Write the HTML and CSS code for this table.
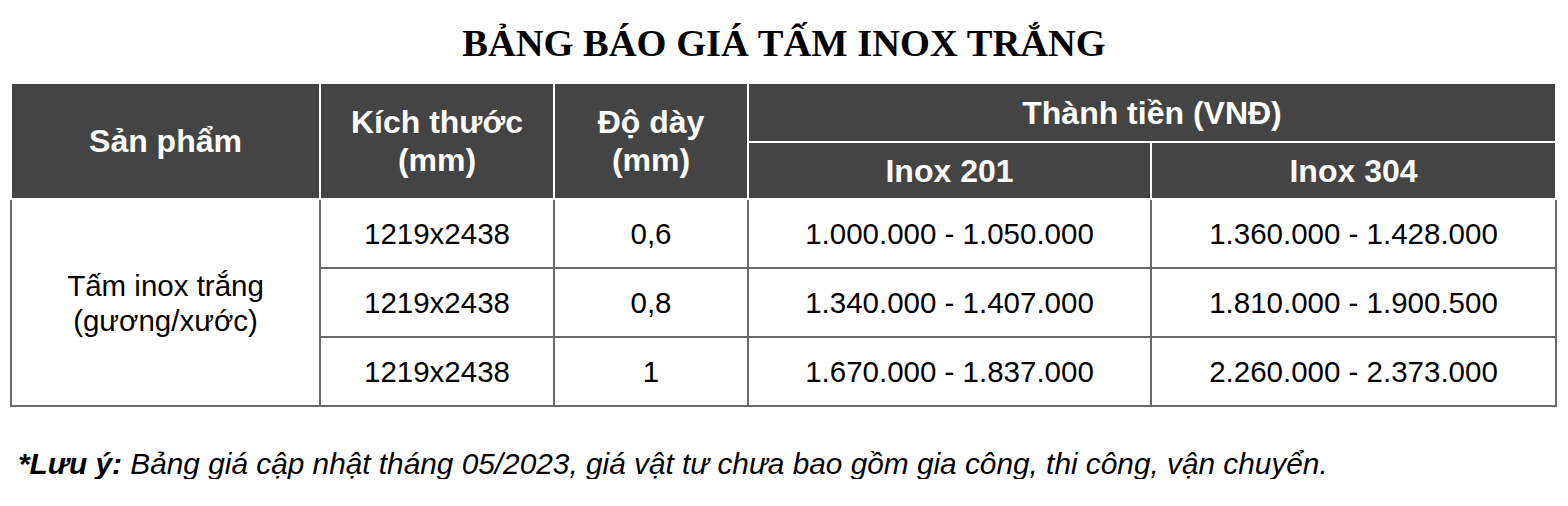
FILE: index.html
```html
<!DOCTYPE html>
<html lang="vi">
<head>
<meta charset="utf-8">
<title>Bảng báo giá tấm inox trắng</title>
<link rel="stylesheet" href="styles.css">
</head>
<body>
<h1 class="title">BẢNG BÁO GIÁ TẤM INOX TRẮNG</h1>
<table class="price">
  <colgroup>
    <col class="c1"><col class="c2"><col class="c3"><col class="c4"><col class="c5">
  </colgroup>
  <thead>
    <tr class="h1">
      <th rowspan="2">Sản phẩm</th>
      <th rowspan="2">Kích thước<br>(mm)</th>
      <th rowspan="2">Độ dày<br>(mm)</th>
      <th colspan="2">Thành tiền (VNĐ)</th>
    </tr>
    <tr class="h2">
      <th>Inox 201</th>
      <th>Inox 304</th>
    </tr>
  </thead>
  <tbody>
    <tr>
      <td rowspan="3" class="prod">Tấm inox trắng<br>(gương/xước)</td>
      <td>1219x2438</td>
      <td>0,6</td>
      <td>1.000.000 - 1.050.000</td>
      <td>1.360.000 - 1.428.000</td>
    </tr>
    <tr>
      <td>1219x2438</td>
      <td>0,8</td>
      <td>1.340.000 - 1.407.000</td>
      <td>1.810.000 - 1.900.500</td>
    </tr>
    <tr>
      <td>1219x2438</td>
      <td>1</td>
      <td>1.670.000 - 1.837.000</td>
      <td>2.260.000 - 2.373.000</td>
    </tr>
  </tbody>
</table>
<p class="note"><b>*Lưu ý:</b> Bảng giá cập nhật tháng 05/2023, giá vật tư chưa bao gồm gia công, thi công, vận chuyển.</p>
</body>
</html>
```
FILE: styles.css
```css
html, body {
  margin: 0;
  padding: 0;
  background: #ffffff;
}
body {
  font-family: "Liberation Sans", Arial, sans-serif;
  color: #000;
}
.title {
  margin: 24px 0 20px 0;
  height: 38px;
  line-height: 38px;
  font-family: "Liberation Serif", "Times New Roman", serif;
  font-weight: bold;
  font-size: 38.5px;
  text-align: center;
}
.price {
  margin-left: 10px;
  width: 1545px;
  border-collapse: collapse;
  table-layout: fixed;
}
.c1 { width: 309px; }
.c2 { width: 234px; }
.c3 { width: 194px; }
.c4 { width: 403px; }
.c5 { width: 405px; }
.price th {
  background: #444444;
  color: #ffffff;
  font-weight: bold;
  font-size: 32px;
  line-height: 38px;
  border: 2px solid #ffffff;
  padding: 0;
  text-align: center;
  vertical-align: middle;
}
.price .h1 th { height: 57px; }
.price .h2 th { height: 55px; }
.price td {
  border: 2px solid #6a6a6a;
  font-size: 29.5px;
  line-height: 34px;
  height: 67px;
  padding: 0;
  text-align: center;
  vertical-align: middle;
}
.price td.prod {
  line-height: 35px;
}
.note {
  margin: 42px 0 0 18px;
  font-size: 29.8px;
  line-height: 30px;
  font-style: italic;
}
.note b {
  font-weight: bold;
}
```
